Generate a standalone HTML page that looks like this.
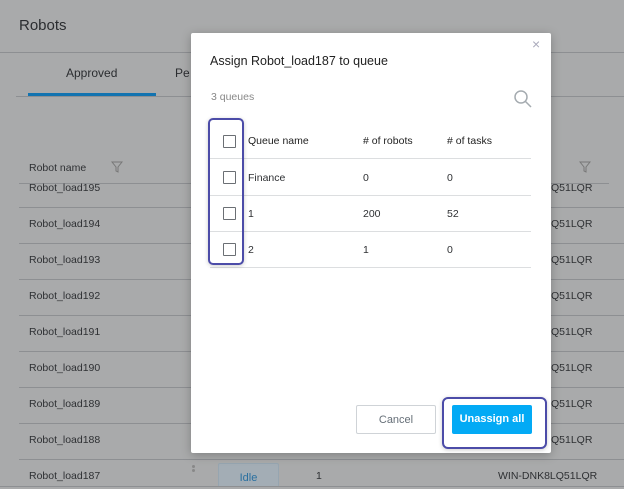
<!DOCTYPE html>
<html><head><style>
*{margin:0;padding:0;box-sizing:border-box}
html,body{width:624px;height:489px;overflow:hidden}
body{background:#a9aaab;font-family:"Liberation Sans",sans-serif;position:relative;color:#333}
.a{position:absolute}
.t{font-size:10.5px;color:#2e3033}
.ln{position:absolute;height:1px;background:#8d8f92}
.ml{position:absolute;height:1px;background:#dcdee0;left:19px;width:321px}
.cb{position:absolute;left:32px;width:13px;height:13px;border:1px solid #6b6f74;border-radius:1px;background:#fff}
</style></head><body>
<div class="a" style="left:19px;top:17px;font-size:15px;color:#2b2d30">Robots</div>
<div class="ln" style="left:0;top:52px;width:624px"></div>
<div class="a" style="left:66px;top:66px;font-size:12px;color:#2b2d30">Approved</div>
<div class="a" style="left:175px;top:66px;font-size:12px;color:#2b2d30">Pe</div>
<div class="a" style="left:28px;top:93px;width:128px;height:3px;background:#1273b0"></div>
<div class="ln" style="left:16px;top:96px;width:608px"></div>
<div class="a t" style="left:29px;top:162px">Robot name</div>
<svg class="a" style="left:111px;top:161px" width="12" height="12" viewBox="0 0 12 12"><path d="M1 1h10L7 6v5L5 10V6z" fill="none" stroke="#777" stroke-width="1"/></svg>
<div class="a t" style="left:545px;top:162px">e</div>
<svg class="a" style="left:579px;top:161px" width="12" height="12" viewBox="0 0 12 12"><path d="M1 1h10L7 6v5L5 10V6z" fill="none" stroke="#777" stroke-width="1"/></svg>
<div class="ln" style="left:19px;top:183px;width:590px"></div>
<div class="a t" style="left:29px;top:182px">Robot_load195</div>
<div class="a t" style="left:29px;top:218px">Robot_load194</div>
<div class="a t" style="left:29px;top:254px">Robot_load193</div>
<div class="a t" style="left:29px;top:290px">Robot_load192</div>
<div class="a t" style="left:29px;top:326px">Robot_load191</div>
<div class="a t" style="left:29px;top:362px">Robot_load190</div>
<div class="a t" style="left:29px;top:398px">Robot_load189</div>
<div class="a t" style="left:29px;top:434px">Robot_load188</div>
<div class="a t" style="left:29px;top:470px">Robot_load187</div>
<div class="a t" style="left:551px;top:182px">Q51LQR</div>
<div class="a t" style="left:551px;top:218px">Q51LQR</div>
<div class="a t" style="left:551px;top:254px">Q51LQR</div>
<div class="a t" style="left:551px;top:290px">Q51LQR</div>
<div class="a t" style="left:551px;top:326px">Q51LQR</div>
<div class="a t" style="left:551px;top:362px">Q51LQR</div>
<div class="a t" style="left:551px;top:398px">Q51LQR</div>
<div class="a t" style="left:551px;top:434px">Q51LQR</div>
<div class="a t" style="left:498px;top:470px">WIN-DNK8LQ51LQR</div>
<div class="ln" style="left:19px;top:207px;width:605px"></div>
<div class="ln" style="left:19px;top:243px;width:605px"></div>
<div class="ln" style="left:19px;top:279px;width:605px"></div>
<div class="ln" style="left:19px;top:315px;width:605px"></div>
<div class="ln" style="left:19px;top:351px;width:605px"></div>
<div class="ln" style="left:19px;top:387px;width:605px"></div>
<div class="ln" style="left:19px;top:423px;width:605px"></div>
<div class="ln" style="left:19px;top:459px;width:605px"></div>
<div class="a" style="left:218px;top:463px;width:61px;height:24px;border:1px solid #96a5b0;border-bottom:none;background:#a3adb5;border-radius:2px 2px 0 0;color:#2a70a0;font-size:11px;text-align:center;padding-top:8px">Idle</div>
<div class="ln" style="left:0;top:486px;width:624px"></div>
<div class="a" style="left:192px;top:465px;width:3px;height:3px;background:#888;border-radius:50%;box-shadow:0 4px 0 #888"></div>
<div class="a t" style="left:316px;top:470px">1</div>

<div class="a" style="left:191px;top:33px;width:360px;height:420px;background:#fff;border-radius:2px;box-shadow:0 2px 10px rgba(0,0,0,.25)">
 <div class="a" style="left:341px;top:3px;font-size:14px;color:#aab">×</div>
 <div class="a" style="left:19px;top:21px;font-size:12.5px;color:#222">Assign Robot_load187 to queue</div>
 <div class="a" style="left:20px;top:58px;font-size:10.5px;color:#888">3 queues</div>
 <svg class="a" style="left:322px;top:56px" width="20" height="20" viewBox="0 0 20 20"><circle cx="8" cy="8" r="6" fill="none" stroke="#a5abb0" stroke-width="1.5"/><path d="M12.5 12.5L18 18" stroke="#a5abb0" stroke-width="1.5"/></svg>
 <div class="a" style="left:57px;top:102px;font-size:10.5px;color:#222">Queue name</div>
 <div class="a" style="left:172px;top:102px;font-size:10.5px;color:#222"># of robots</div>
 <div class="a" style="left:256px;top:102px;font-size:10.5px;color:#222"># of tasks</div>
 <div class="ml" style="top:125px"></div>
 <div class="a t" style="left:57px;top:139px">Finance</div><div class="a t" style="left:172px;top:139px">0</div><div class="a t" style="left:256px;top:139px">0</div>
 <div class="ml" style="top:162px"></div>
 <div class="a t" style="left:57px;top:175px">1</div><div class="a t" style="left:172px;top:175px">200</div><div class="a t" style="left:256px;top:175px">52</div>
 <div class="ml" style="top:198px"></div>
 <div class="a t" style="left:57px;top:211px">2</div><div class="a t" style="left:172px;top:211px">1</div><div class="a t" style="left:256px;top:211px">0</div>
 <div class="ml" style="top:234px"></div>
 <div class="cb" style="top:102px"></div><div class="cb" style="top:138px"></div><div class="cb" style="top:174px"></div><div class="cb" style="top:210px"></div>
 <div class="a" style="left:17px;top:85px;width:36px;height:147px;border:2px solid #4c4ca8;border-radius:5px;box-shadow:0 1px 4px rgba(0,0,0,.2)"></div>
 <div class="a" style="left:165px;top:372px;width:80px;height:29px;border:1px solid #cfd3d7;border-radius:2px;font-size:11px;color:#666f78;text-align:center;line-height:28px">Cancel</div>
 <div class="a" style="left:261px;top:372px;width:80px;height:29px;background:#03aaf5;border-radius:2px;font-size:11px;color:#fff;font-weight:bold;text-align:center;line-height:29px">Unassign all</div>
</div>
<div class="a" style="left:442px;top:397px;width:105px;height:52px;border:2px solid #4c4ca8;border-radius:6px;box-shadow:0 1px 4px rgba(0,0,0,.2)"></div>
</body></html>
